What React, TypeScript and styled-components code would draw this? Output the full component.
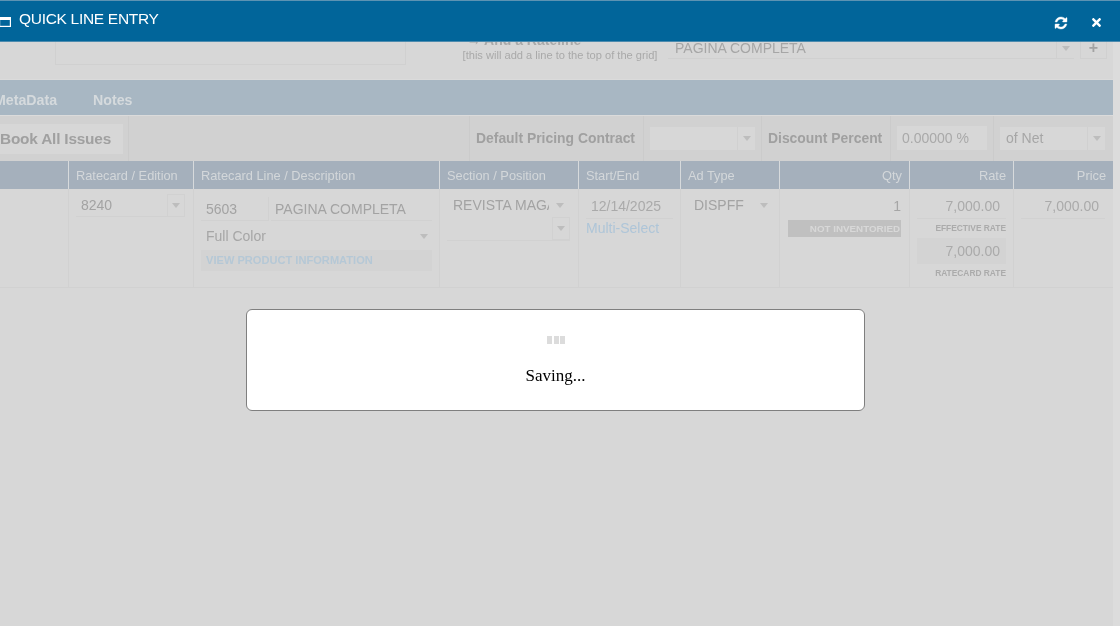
import React from "react";
import styled, { createGlobalStyle } from "styled-components";
import { FaTimes } from "react-icons/fa";

const Global = createGlobalStyle`
  html, body { margin: 0; padding: 0; background: #dcdcdc; }
  #root { width: 1120px; height: 626px; }
  * { box-sizing: border-box; }
`;

const Page = styled.div`
  position: relative;
  width: 1120px;
  height: 626px;
  overflow: hidden;
  background: #dcdcdc;
  font-family: "Liberation Sans", Arial, sans-serif;
  color: #a3a3a3;
  filter: blur(0.3px);
`;

const TitleBar = styled.header`
  position: relative;
  height: 42px;
  background: #01659a;
  border-top: 1px solid #5c93b3;
  border-bottom: 1px solid #4d8bae;
  color: #fff;
  display: flex;
  align-items: center;
  padding-right: 17px;
  margin-bottom: -1px;
`;

const WindowGlyph = styled.svg`
  width: 12px;
  height: 10px;
  margin-left: -1px;
  margin-top: 2px;
  flex: none;
`;

const Title = styled.h1`
  margin: 0 0 5px 8px;
  font-size: 15.5px;
  font-weight: 400;
  letter-spacing: -0.3px;
  flex: 1;
`;

const TitleActions = styled.div`
  display: flex;
  align-items: center;
  gap: 22px;
  margin-top: 3px;
  font-size: 13px;
`;

const RefreshGlyph = styled.svg`
  width: 14px;
  height: 14px;
`;

const Content = styled.main`
  width: 1113px;
  height: 585px;
  background: #d7d7d7;
`;

const TopForm = styled.section`
  height: 38px;
  overflow: hidden;
  display: flex;
  align-items: flex-end;
  padding-left: 55px;
  padding-bottom: 14px;
`;

const NoteBox = styled.div`
  width: 351px;
  height: 40px;
  border: 1px solid #d0d0d0;
  flex: none;
`;

const RatelinePrompt = styled.div`
  width: 196px;
  margin-left: 56px;
  margin-bottom: 3px;
  flex: none;
  display: flex;
  flex-direction: column;
  align-items: center;
  white-space: nowrap;
`;

const PromptHead = styled.div`
  font-size: 14px;
  font-weight: 700;
  line-height: 16px;
  margin-top: -7px;
  margin-right: 72px;
  color: #a9a9a9;
`;

const PromptHint = styled.div`
  font-size: 11.1px;
  line-height: 14px;
  color: #a9a9a9;
`;

const LongSelect = styled.div`
  width: 406px;
  height: 20px;
  margin-left: 10px;
  margin-bottom: 6px;
  border-bottom: 1px solid #d0d0d0;
  display: flex;
  align-items: stretch;
  justify-content: space-between;
  padding-left: 7px;
  font-size: 14px;
  line-height: 18px;
  color: #a6a6a6;
  flex: none;
`;

const PlusButton = styled.div`
  width: 27px;
  height: 20px;
  margin-left: 6px;
  margin-bottom: 6px;
  border: 1px solid #d0d0d0;
  border-top: none;
  font-weight: 700;
  font-size: 16px;
  line-height: 18px;
  text-align: center;
  color: #a3a3a3;
  flex: none;
`;

const CaretBox = styled.span`
  width: 18px;
  border-left: 1px solid #d0d0d0;
  display: flex;
  align-items: center;
  justify-content: center;
  flex: none;
`;

const Caret = styled.span`
  width: 0;
  height: 0;
  border-left: 4px solid transparent;
  border-right: 4px solid transparent;
  border-top: 5px solid #bdbdbd;
  flex: none;
`;

const Tabs = styled.nav`
  height: 37px;
  padding-top: 4px;
  background: #a8b7c3;
  border-top: 1px solid #dbdbdb;
  border-bottom: 1px solid #dbdbdb;
  display: flex;
  align-items: center;
  gap: 36px;
  font-size: 14.2px;
  font-weight: 700;
  color: #d5dadd;
`;

const TabLabel = styled.span`
  &:first-child {
    margin-left: -6px;
  }
`;

const Toolbar = styled.div`
  height: 45px;
  background: #d1d1d1;
  display: flex;
  align-items: center;
  font-weight: 700;
  font-size: 13.9px;
  color: #a0a0a0;
`;

const BookButton = styled.div`
  width: 123px;
  height: 30px;
  margin-right: 5px;
  background: #d7d7d7;
  font-size: 15.4px;
  letter-spacing: -0.2px;
  line-height: 29px;
  white-space: nowrap;
  padding-right: 14px;
  text-align: right;
  flex: none;
`;

const ToolSection = styled.div<{ $w: number }>`
  width: ${(p) => p.$w}px;
  height: 100%;
  border-left: 1px solid #cbcbcb;
  display: flex;
  align-items: center;
  padding-left: 6px;
  padding-bottom: 1px;
  white-space: nowrap;
  flex: none;
`;

const ToolSpacer = styled.div`
  flex: none;
  width: 341px;
  height: 100%;
  border-left: 1px solid #cbcbcb;
`;

const ToolSelect = styled.div<{ $w: number }>`
  width: ${(p) => p.$w}px;
  height: 23px;
  background: #d7d7d7;
  display: flex;
  align-items: stretch;
  justify-content: space-between;
  padding-left: 6px;
  font-weight: 400;
  font-size: 14px;
  line-height: 23px;
  color: #a6a6a6;
`;

const ToolInput = styled.div`
  width: 90px;
  height: 24px;
  background: #d7d7d7;
  padding-left: 5px;
  line-height: 24px;
  font-weight: 400;
  font-size: 14px;
  color: #a9a9a9;
`;

const columns = "68px 125px 246px 139px 102px 99px 130px 104px 100px";

const GridHead = styled.div`
  height: 28px;
  display: grid;
  grid-template-columns: ${columns};
  background: #a5b0bc;
`;

const HeadCell = styled.div<{ $right?: boolean }>`
  border-left: 1px solid #d7dadc;
  padding: 1px 7px 0;
  font-size: 12.8px;
  line-height: 27px;
  color: #d3d7da;
  white-space: nowrap;
  text-align: ${(p) => (p.$right ? "right" : "left")};
  &:first-child {
    border-left: none;
  }
`;

const GridRow = styled.div`
  height: 99px;
  display: grid;
  grid-template-columns: ${columns};
  border-bottom: 1px solid #d1d1d1;
`;

const Cell = styled.div<{ $pad?: string }>`
  border-left: 1px solid #d1d1d1;
  padding: ${(p) => p.$pad ?? "0"};
  display: flex;
  flex-direction: column;
  align-items: stretch;
  &:first-child {
    border-left: none;
  }
`;

const QtyValue = styled.div`
  font-size: 14px;
  line-height: 18px;
  color: #a6a6a6;
  text-align: right;
`;

const EditionSelect = styled.div`
  height: 23px;
  display: flex;
  align-items: stretch;
  justify-content: space-between;
  padding-left: 5px;
  font-size: 14px;
  line-height: 22px;
  border-bottom: 1px solid #d1d1d1;
`;

const BoxedCaret = styled.span`
  width: 18px;
  height: 23px;
  border: 1px solid #d1d1d1;
  display: flex;
  align-items: center;
  justify-content: center;
  margin-bottom: -1px;
`;

const LineCodes = styled.div`
  display: flex;
  height: 24px;
  font-size: 14px;
  line-height: 24px;
`;

const CodeField = styled.div`
  width: 68px;
  padding-left: 5px;
  border-bottom: 1px solid #d1d1d1;
  border-right: 1px solid #d1d1d1;
`;

const NameField = styled.div`
  flex: 1;
  margin-left: 2px;
  padding-left: 4px;
  border-bottom: 1px solid #d1d1d1;
  white-space: nowrap;
`;

const ColorRow = styled.div`
  height: 26px;
  margin-top: 2px;
  padding: 0 4px 0 5px;
  display: flex;
  align-items: center;
  justify-content: space-between;
  font-size: 14px;
  color: #a6a6a6;
`;

const InfoLink = styled.div`
  height: 21px;
  margin-top: 1px;
  padding-left: 5px;
  background: #d3d3d3;
  font-size: 11.1px;
  font-weight: 700;
  line-height: 21px;
  color: #b5c8d6;
  white-space: nowrap;
`;

const Inline = styled.div`
  display: flex;
  align-items: center;
  justify-content: space-between;
  font-size: 14px;
  height: 18px;
  padding-left: 6px;
`;

const ClippedText = styled.span`
  width: 96px;
  overflow: hidden;
  white-space: nowrap;
`;

const PositionSelect = styled.div`
  height: 24px;
  margin-top: 3px;
  display: flex;
  justify-content: flex-end;
  border-bottom: 1px solid #d1d1d1;
`;

const DateField = styled.div`
  height: 24px;
  padding-right: 12px;
  text-align: right;
  font-size: 14px;
  line-height: 22px;
  border-bottom: 1px solid #d1d1d1;
  color: #aaaaaa;
`;

const MultiLink = styled.div`
  font-size: 14px;
  line-height: 18px;
  color: #aec5d8;
`;

const StatusTag = styled.div`
  height: 17px;
  margin-top: 5px;
  background: #c0c0c0;
  color: #d8d8d8;
  font-size: 9.8px;
  font-weight: 700;
  line-height: 17px;
  text-align: right;
  padding-right: 1px;
  white-space: nowrap;
`;

const Amount = styled.div`
  height: 24px;
  line-height: 22px;
  text-align: right;
  padding-right: 6px;
  font-size: 14px;
  color: #aaaaaa;
  border-bottom: 1px solid #d1d1d1;
`;

const CardAmount = styled.div`
  height: 26px;
  line-height: 26px;
  text-align: right;
  padding-right: 6px;
  font-size: 14px;
  color: #aaaaaa;
  background: #d3d3d3;
`;

const RateCaption = styled.div`
  height: 19px;
  line-height: 19px;
  text-align: right;
  font-size: 8.4px;
  font-weight: 700;
  color: #ababab;
  white-space: nowrap;
`;

const Dialog = styled.div`
  position: absolute;
  left: 246px;
  top: 309px;
  width: 619px;
  height: 102px;
  background: #fff;
  border: 1px solid #7f7f7f;
  border-radius: 6px;
  display: flex;
  flex-direction: column;
  align-items: center;
`;

const Loader = styled.div`
  display: flex;
  gap: 1.5px;
  margin-top: 26px;
  margin-left: 1px;
`;

const LoaderBar = styled.span`
  width: 5px;
  height: 8px;
  background: #dcdcdc;
`;

const SavingText = styled.div`
  margin-top: 22px;
  font-family: "Liberation Serif", "Times New Roman", serif;
  font-size: 17px;
  line-height: 20px;
  color: #000;
`;

export default function App() {
  return (
    <Page>
      <Global />
      <TitleBar>
        <WindowGlyph viewBox="0 0 12 10" aria-hidden="true">
          <rect x="0.6" y="0.6" width="10.8" height="8.8" fill="none" stroke="#fff" strokeWidth="1.2" />
          <rect x="0" y="0" width="12" height="3" fill="#fff" />
        </WindowGlyph>
        <Title>QUICK LINE ENTRY</Title>
        <TitleActions>
          <RefreshGlyph viewBox="0 0 1792 1792" aria-hidden="true">
            <path
              fill="#fff"
              stroke="#fff"
              strokeWidth="50"
              d="M1639 1056q0 5-1 7-64 268-268 434.5t-478 166.5q-146 0-282.5-55t-243.5-157l-129 129q-19 19-45 19t-45-19-19-45v-448q0-26 19-45t45-19h448q26 0 45 19t19 45-19 45l-137 137q71 66 161 102t187 36q134 0 250-65t186-179q11-17 53-117 8-23 30-23h192q13 0 22.5 9.5t9.5 22.5zm25-800v448q0 26-19 45t-45 19h-448q-26 0-45-19t-19-45 19-45l138-138q-148-137-349-137-134 0-250 65t-186 179q-11 17-53 117-8 23-30 23h-199q-13 0-22.5-9.5t-9.5-22.5v-7q65-268 270-434.5t480-166.5q146 0 284 55.5t245 156.5l130-129q19-19 45-19t45 19 19 45z"
            />
          </RefreshGlyph>
          <FaTimes />
        </TitleActions>
      </TitleBar>

      <Content>
        <TopForm>
          <NoteBox />
          <RatelinePrompt>
            <PromptHead>→ And a Rateline</PromptHead>
            <PromptHint>[this will add a line to the top of the grid]</PromptHint>
          </RatelinePrompt>
          <LongSelect>
            PAGINA COMPLETA
            <CaretBox><Caret /></CaretBox>
          </LongSelect>
          <PlusButton>+</PlusButton>
        </TopForm>

        <Tabs>
          <TabLabel>MetaData</TabLabel>
          <TabLabel>Notes</TabLabel>
        </Tabs>

        <Toolbar>
          <BookButton>Book All Issues</BookButton>
          <ToolSpacer />
          <ToolSection $w={174}>Default Pricing Contract</ToolSection>
          <ToolSection $w={118}>
            <ToolSelect $w={105}>
              <span />
              <CaretBox><Caret /></CaretBox>
            </ToolSelect>
          </ToolSection>
          <ToolSection $w={129}>Discount Percent</ToolSection>
          <ToolSection $w={103}>
            <ToolInput>0.00000 %</ToolInput>
          </ToolSection>
          <ToolSection $w={120}>
            <ToolSelect $w={105}>
              of Net
              <CaretBox><Caret /></CaretBox>
            </ToolSelect>
          </ToolSection>
        </Toolbar>

        <GridHead>
          <HeadCell />
          <HeadCell>Ratecard / Edition</HeadCell>
          <HeadCell>Ratecard Line / Description</HeadCell>
          <HeadCell>Section / Position</HeadCell>
          <HeadCell>Start/End</HeadCell>
          <HeadCell>Ad Type</HeadCell>
          <HeadCell $right>Qty</HeadCell>
          <HeadCell $right>Rate</HeadCell>
          <HeadCell $right>Price</HeadCell>
        </GridHead>

        <GridRow>
          <Cell />
          <Cell $pad="5px 8px 0 7px">
            <EditionSelect>
              8240
              <BoxedCaret><Caret /></BoxedCaret>
            </EditionSelect>
          </Cell>
          <Cell $pad="8px 7px 0">
            <LineCodes>
              <CodeField>5603</CodeField>
              <NameField>PAGINA COMPLETA</NameField>
            </LineCodes>
            <ColorRow>
              Full Color
              <Caret />
            </ColorRow>
            <InfoLink>VIEW PRODUCT INFORMATION</InfoLink>
          </Cell>
          <Cell $pad="7px 8px 0 7px">
            <Inline>
              <ClippedText>REVISTA MAGAZINE</ClippedText>
              <Caret />
              <span />
            </Inline>
            <PositionSelect>
              <BoxedCaret><Caret /></BoxedCaret>
            </PositionSelect>
          </Cell>
          <Cell $pad="6px 7px 0">
            <DateField>12/14/2025</DateField>
            <MultiLink>Multi-Select</MultiLink>
          </Cell>
          <Cell $pad="7px 11px 0 7px">
            <Inline>
              <span>DISPFF</span>
              <Caret />
            </Inline>
          </Cell>
          <Cell $pad="8px 8px 0 8px">
            <QtyValue>1</QtyValue>
            <StatusTag>NOT INVENTORIED</StatusTag>
          </Cell>
          <Cell $pad="6px 7px 0 7px">
            <Amount>7,000.00</Amount>
            <RateCaption>EFFECTIVE RATE</RateCaption>
            <CardAmount>7,000.00</CardAmount>
            <RateCaption>RATECARD RATE</RateCaption>
          </Cell>
          <Cell $pad="6px 8px 0 7px">
            <Amount>7,000.00</Amount>
          </Cell>
        </GridRow>
      </Content>

      <Dialog role="status">
        <Loader>
          <LoaderBar />
          <LoaderBar />
          <LoaderBar />
        </Loader>
        <SavingText>Saving...</SavingText>
      </Dialog>
    </Page>
  );
}
